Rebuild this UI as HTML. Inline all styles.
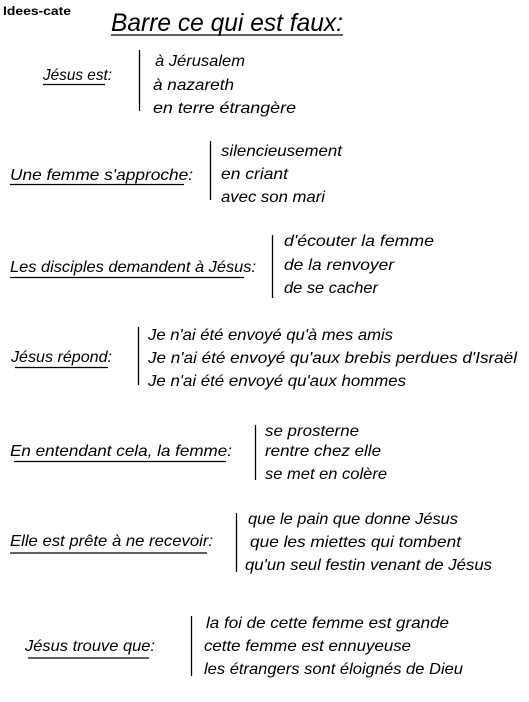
<!DOCTYPE html>
<html><head><meta charset="utf-8"><style>
html,body{margin:0;padding:0;background:#fff;width:529px;height:702px;overflow:hidden}
svg{display:block}
text{font-family:"Liberation Sans",sans-serif;font-style:italic;font-size:16px;fill:#000}
.b{font-style:normal;font-weight:bold;font-size:12px}
.t{font-size:25px}
line{stroke:#000;stroke-width:1.3}
</style></head><body>
<svg width="529" height="702" viewBox="0 0 529 702" xmlns="http://www.w3.org/2000/svg">
<text class="b" x="3" y="15" textLength="68" lengthAdjust="spacingAndGlyphs">Idees-cate</text>
<text class="t" x="111" y="31" textLength="232" lengthAdjust="spacingAndGlyphs">Barre ce qui est faux:</text>
<line x1="111" y1="35" x2="343" y2="35"/>

<text x="43" y="80" textLength="69" lengthAdjust="spacingAndGlyphs">Jésus est:</text>
<line x1="43" y1="84.5" x2="105" y2="84.5"/>
<line x1="139.5" y1="50" x2="139.5" y2="111"/>
<text x="155" y="66" textLength="90" lengthAdjust="spacingAndGlyphs">à Jérusalem</text>
<text x="153" y="90" textLength="81" lengthAdjust="spacingAndGlyphs">à nazareth</text>
<text x="153" y="113" textLength="143" lengthAdjust="spacingAndGlyphs">en terre étrangère</text>

<text x="10" y="180" textLength="183" lengthAdjust="spacingAndGlyphs">Une femme s'approche:</text>
<line x1="10" y1="184.5" x2="184" y2="184.5"/>
<line x1="210.5" y1="141" x2="210.5" y2="200"/>
<text x="221" y="156" textLength="121" lengthAdjust="spacingAndGlyphs">silencieusement</text>
<text x="221" y="179" textLength="67" lengthAdjust="spacingAndGlyphs">en criant</text>
<text x="221" y="202" textLength="104" lengthAdjust="spacingAndGlyphs">avec son mari</text>

<text x="10" y="272" textLength="246" lengthAdjust="spacingAndGlyphs">Les disciples demandent à Jésus:</text>
<line x1="10" y1="277.5" x2="244" y2="277.5"/>
<line x1="272.5" y1="235" x2="272.5" y2="298"/>
<text x="284" y="246" textLength="150" lengthAdjust="spacingAndGlyphs">d'écouter la femme</text>
<text x="284" y="270" textLength="110" lengthAdjust="spacingAndGlyphs">de la renvoyer</text>
<text x="284" y="293" textLength="94" lengthAdjust="spacingAndGlyphs">de se cacher</text>

<text x="11" y="362" textLength="101" lengthAdjust="spacingAndGlyphs">Jésus répond:</text>
<line x1="15" y1="367.5" x2="108" y2="367.5"/>
<line x1="138.5" y1="327" x2="138.5" y2="385"/>
<text x="148" y="340" textLength="245" lengthAdjust="spacingAndGlyphs">Je n'ai été envoyé qu'à mes amis</text>
<text x="148" y="363" textLength="369" lengthAdjust="spacingAndGlyphs">Je n'ai été envoyé qu'aux brebis perdues d'Israël</text>
<text x="148" y="386" textLength="258" lengthAdjust="spacingAndGlyphs">Je n'ai été envoyé qu'aux hommes</text>

<text x="10" y="456" textLength="222" lengthAdjust="spacingAndGlyphs">En entendant cela, la femme:</text>
<line x1="14" y1="461.5" x2="226" y2="461.5"/>
<line x1="255.5" y1="425" x2="255.5" y2="480"/>
<text x="265" y="436" textLength="94" lengthAdjust="spacingAndGlyphs">se prosterne</text>
<text x="265" y="456" textLength="116" lengthAdjust="spacingAndGlyphs">rentre chez elle</text>
<text x="265" y="479" textLength="122" lengthAdjust="spacingAndGlyphs">se met en colère</text>

<text x="10" y="546" textLength="203" lengthAdjust="spacingAndGlyphs">Elle est prête à ne recevoir:</text>
<line x1="10" y1="553" x2="207" y2="553"/>
<line x1="236.5" y1="513" x2="236.5" y2="572"/>
<text x="248" y="524" textLength="210" lengthAdjust="spacingAndGlyphs">que le pain que donne Jésus</text>
<text x="250" y="547" textLength="211" lengthAdjust="spacingAndGlyphs">que les miettes qui tombent</text>
<text x="245" y="570" textLength="247" lengthAdjust="spacingAndGlyphs">qu'un seul festin venant de Jésus</text>

<text x="25" y="651" textLength="130" lengthAdjust="spacingAndGlyphs">Jésus trouve que:</text>
<line x1="28" y1="658" x2="149" y2="658"/>
<line x1="191.5" y1="616" x2="191.5" y2="676"/>
<text x="206" y="628" textLength="243" lengthAdjust="spacingAndGlyphs">la foi de cette femme est grande</text>
<text x="204" y="651" textLength="207" lengthAdjust="spacingAndGlyphs">cette femme est ennuyeuse</text>
<text x="204" y="674" textLength="259" lengthAdjust="spacingAndGlyphs">les étrangers sont éloignés de Dieu</text>
</svg>
</body></html>
